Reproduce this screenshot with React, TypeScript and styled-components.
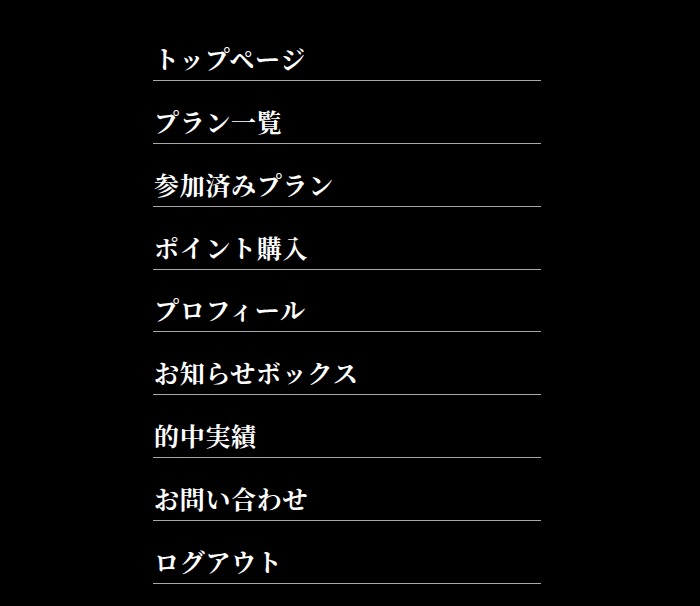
import styled, { createGlobalStyle } from 'styled-components'

const GlobalStyle = createGlobalStyle`
  html, body {
    margin: 0;
    padding: 0;
    background: #000;
  }
`

const items = [
  'トップページ',
  'プラン一覧',
  '参加済みプラン',
  'ポイント購入',
  'プロフィール',
  'お知らせボックス',
  '的中実績',
  'お問い合わせ',
  'ログアウト',
]

const App = () => {
  return (
    <>
      <GlobalStyle />
      <Page>
        <Menu>
          {items.map((label) => (
            <MenuItem key={label}>
              <MenuLink href="#">{label}</MenuLink>
            </MenuItem>
          ))}
        </Menu>
      </Page>
    </>
  )
}

export default App

const Page = styled.div`
  width: 700px;
  height: 606px;
  background: #000;
  padding-top: 18px;
  box-sizing: border-box;
  overflow: hidden;
`

const Menu = styled.ul`
  list-style: none;
  margin: 0 0 0 153px;
  padding: 0;
  width: 388px;
`

const MenuItem = styled.li`
  display: flex;
  align-items: flex-end;
  height: 54.875px;
  padding-bottom: 7px;
  border-bottom: 1px solid #a8a8a8;
`

const MenuLink = styled.a`
  color: #fff;
  text-decoration: none;
  font-family: 'Noto Serif CJK JP', 'Noto Sans CJK JP', serif;
  font-weight: 700;
  font-size: 25px;
  line-height: 30px;
  padding-left: 1px;
  letter-spacing: 0.7px;
`
